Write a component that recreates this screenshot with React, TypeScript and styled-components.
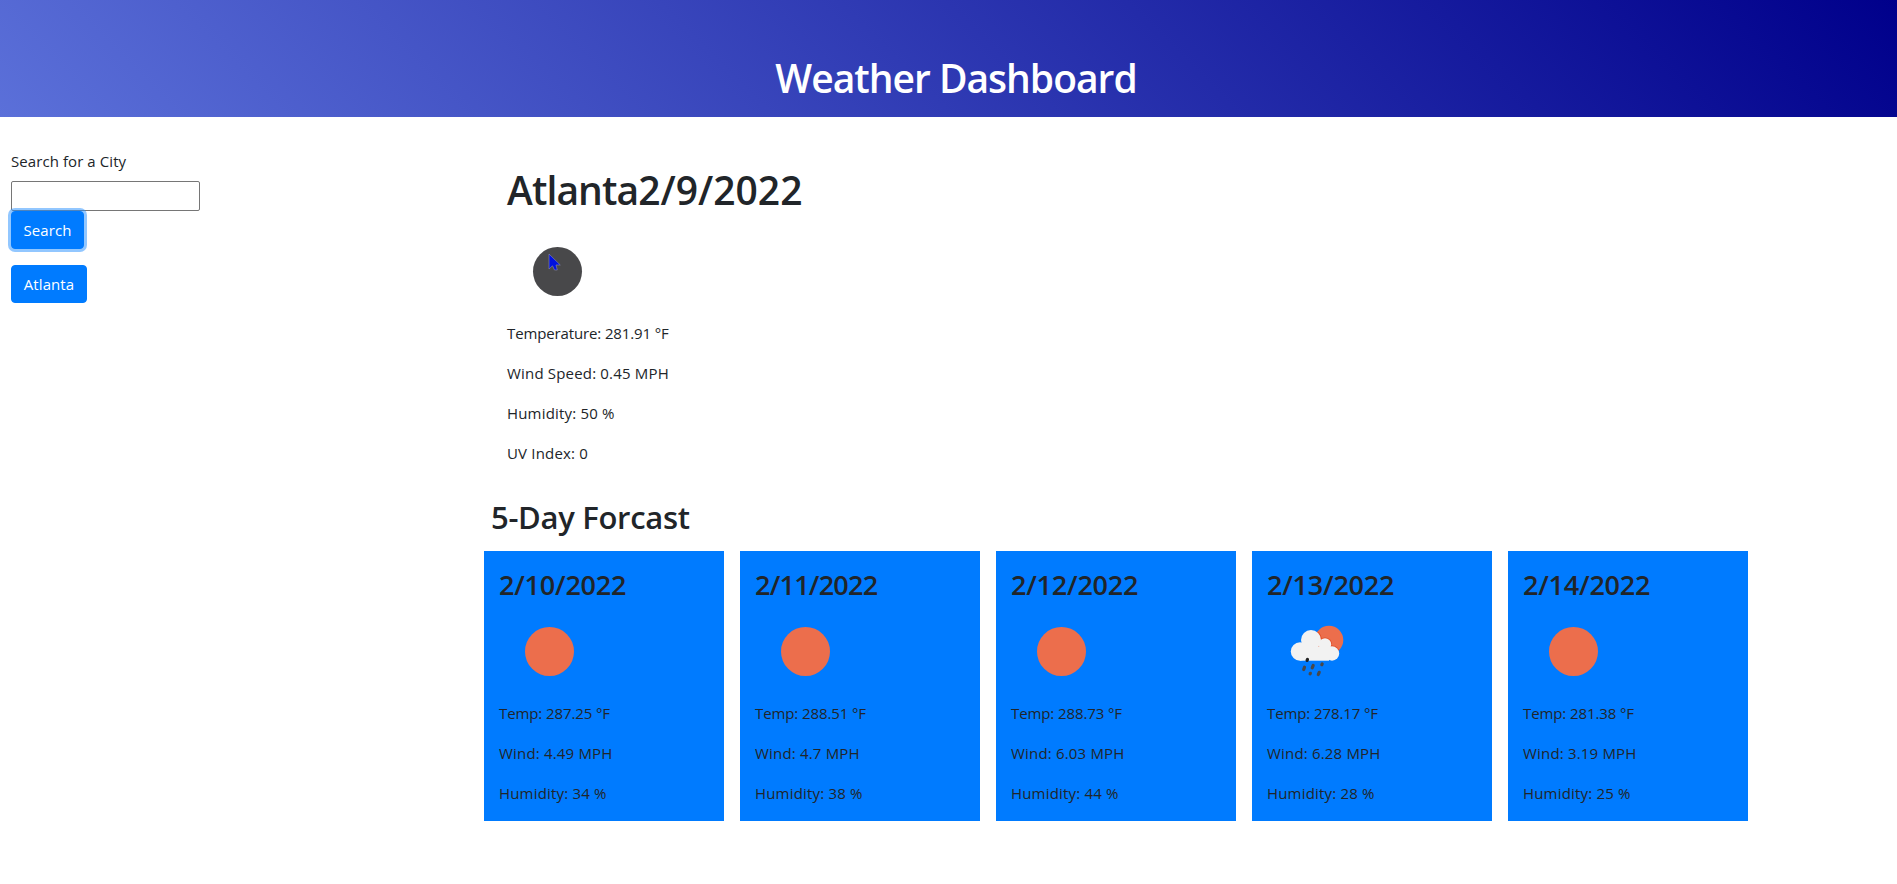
import React from 'react';
import styled, { createGlobalStyle } from 'styled-components';

const GlobalStyle = createGlobalStyle`
  *, *::before, *::after { box-sizing: border-box; }
  body {
    margin: 0;
    background: #fff;
    color: #212529;
    font-family: "Open Sans", "Noto Sans", sans-serif;
    font-size: 15px;
    line-height: 24px;
  }
  h1, h2, h3, p { margin: 0; }
`;

const Header = styled.header`
  height: 117px;
  padding: 54px 0 0 15px;
  text-align: center;
  background: linear-gradient(45deg, #5b70d9, #00008b);
`;

const Title = styled.h1`
  color: #fff;
  font-size: 39px;
  font-weight: 600;
  line-height: 48px;
  letter-spacing: -1px;
`;

const Layout = styled.div`
  display: flex;
`;

const Sidebar = styled.aside`
  display: flex;
  flex-direction: column;
  align-items: flex-start;
  width: 484px;
  padding: 32px 11px 0;
`;

const Label = styled.label`
  margin-bottom: 8px;
  letter-spacing: 0.08px;
`;

const CityInput = styled.input`
  width: 189px;
  height: 30px;
  padding: 1px 2px;
  border: 1px solid #767676;
  border-radius: 2px;
  font: inherit;
`;

const Button = styled.button<{ $focused?: boolean; $width: number }>`
  width: ${(p) => p.$width}px;
  height: 38px;
  padding: 0;
  border: 1px solid #007bff;
  border-radius: 4px;
  background: #007bff;
  color: #fff;
  font: inherit;
  letter-spacing: 0.1px;
  white-space: nowrap;
  box-shadow: ${(p) => (p.$focused ? '0 0 0 3px rgba(38, 143, 255, 0.5)' : 'none')};
  & + & { margin-top: 16px; }
`;

const Main = styled.main`
  padding-top: 49px;
`;

const Current = styled.section`
  padding-left: 23px;
`;

const CityHeading = styled.h1`
  margin-bottom: 7px;
  font-size: 39px;
  font-weight: 600;
  line-height: 48px;
`;

const CityName = styled.span`
  letter-spacing: -0.9px;
`;

const IconBox = styled.div`
  position: relative;
  width: 100px;
  height: 100px;
`;

const Drawing = styled.svg`
  display: block;
`;

const Pointer = styled.svg`
  position: absolute;
  left: 41px;
  top: 32px;
`;

const Reading = styled.p<{ $tracking?: number }>`
  margin-bottom: 16px;
  letter-spacing: ${(p) => p.$tracking ?? 0.18}px;
  white-space: nowrap;
`;

const ForecastHeading = styled.h2`
  margin-top: 33px;
  padding-left: 7px;
  font-size: 31px;
  font-weight: 600;
  line-height: 38px;
  letter-spacing: -0.3px;
`;

const Cards = styled.div`
  display: flex;
  gap: 16px;
  margin-top: 15px;
`;

const Card = styled.article`
  width: 240px;
  height: 270px;
  padding: 17px 15px 0;
  background: #007bff;
`;

const CardDate = styled.h3<{ $tracking?: number }>`
  font-size: 27px;
  font-weight: 600;
  line-height: 33px;
  letter-spacing: ${(p) => p.$tracking ?? -0.2}px;
`;

type Sky = 'clear' | 'rain';

const Disc = ({ color }: { color: string }) => (
  <Drawing width="100" height="100" viewBox="0 0 100 100">
    <circle cx="50.5" cy="50.5" r="24.5" fill={color} />
  </Drawing>
);

const Rain = () => (
  <Drawing width="100" height="100" viewBox="0 -0.5 100 100">
    <clipPath id="sun">
      <circle cx="62" cy="38.5" r="14.3" />
    </clipPath>
    <circle cx="62" cy="38.5" r="14.3" fill="#ec6e4c" />
    <g fill="#e34d26" clipPath="url(#sun)">
      <circle cx="44" cy="38.5" r="10.8" />
      <circle cx="58" cy="43" r="7" />
      <circle cx="65" cy="52" r="8" />
    </g>
    <g fill="#f2f2f2">
      <circle cx="44" cy="38.5" r="10" />
      <circle cx="33" cy="50" r="9.2" />
      <circle cx="58" cy="43" r="6.2" />
      <circle cx="65" cy="52" r="7.2" />
      <path d="M33 45H62V59.2H33Z" />
    </g>
    <g stroke="#48484a" strokeWidth="3.2" strokeLinecap="round">
      <path d="M40.5 57.9L40.1 58.9" stroke="#222" />
      <path d="M37.5 65.7L36.7 68" />
      <path d="M46.2 63.9L45.2 66.3" />
      <path d="M55.2 62.4L54.8 63.2" />
      <path d="M43.4 71.8L43.1 72.4" />
      <path d="M52.2 70.8L51.3 73" />
    </g>
  </Drawing>
);

interface Day {
  date: string;
  tracking?: number;
  sky: Sky;
  temp: string;
  wind: string;
  humidity: string;
}

const days: Day[] = [
  { date: '2/10/2022', sky: 'clear', temp: '287.25', wind: '4.49', humidity: '34' },
  { date: '2/11/2022', tracking: -0.75, sky: 'clear', temp: '288.51', wind: '4.7', humidity: '38' },
  { date: '2/12/2022', sky: 'clear', temp: '288.73', wind: '6.03', humidity: '44' },
  { date: '2/13/2022', sky: 'rain', temp: '278.17', wind: '6.28', humidity: '28' },
  { date: '2/14/2022', sky: 'clear', temp: '281.38', wind: '3.19', humidity: '25' },
];

export default function App() {
  return (
    <>
      <GlobalStyle />
      <Header>
        <Title>Weather Dashboard</Title>
      </Header>
      <Layout>
        <Sidebar>
          <Label htmlFor="city">Search for a City</Label>
          <CityInput id="city" />
          <Button $width={73} $focused>Search</Button>
          <Button $width={76}>Atlanta</Button>
        </Sidebar>
        <Main>
          <Current>
            <CityHeading><CityName>Atlanta</CityName>2/9/2022</CityHeading>
            <IconBox>
              <Disc color="#48484a" />
              <Pointer width="14" height="18" viewBox="0 0 14 18">
                <path d="M1 1V16L4.5 12.8L6.5 17H9.3L8 12H12.3Z" fill="#0010e0" stroke="#8c8cb0" strokeWidth="0.6" />
              </Pointer>
            </IconBox>
            <Reading $tracking={-0.13}>Temperature: 281.91 °F</Reading>
            <Reading>Wind Speed: 0.45 MPH</Reading>
            <Reading>Humidity: 50 %</Reading>
            <Reading>UV Index: 0</Reading>
          </Current>
          <ForecastHeading>5-Day Forcast</ForecastHeading>
          <Cards>
            {days.map((day) => (
              <Card key={day.date}>
                <CardDate $tracking={day.tracking}>{day.date}</CardDate>
                <IconBox>{day.sky === 'rain' ? <Rain /> : <Disc color="#ec6e4c" />}</IconBox>
                <Reading $tracking={-0.1}>Temp: {day.temp} °F</Reading>
                <Reading>Wind: {day.wind} MPH</Reading>
                <Reading>Humidity: {day.humidity} %</Reading>
              </Card>
            ))}
          </Cards>
        </Main>
      </Layout>
    </>
  );
}
